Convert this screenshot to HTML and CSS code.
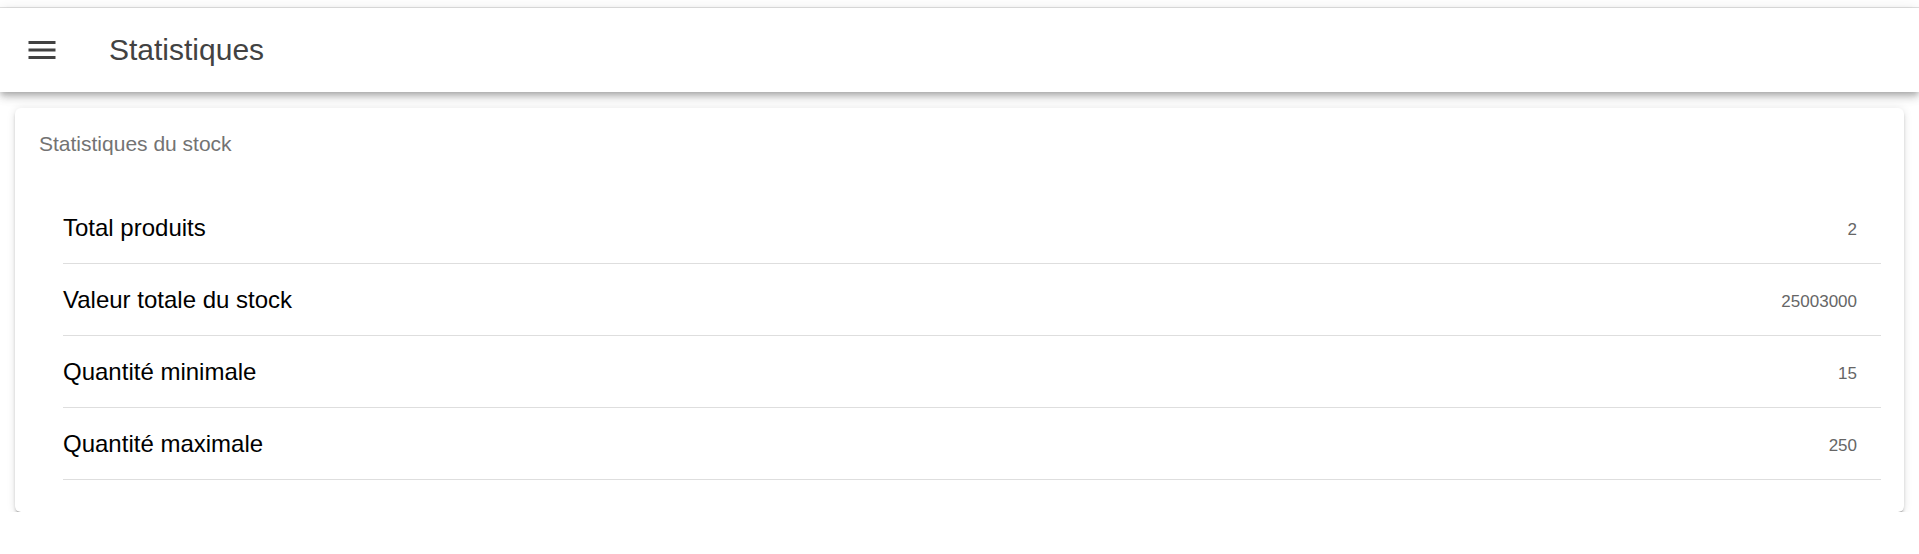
FILE: index.html
```html
<!DOCTYPE html>
<html lang="fr">
<head>
<meta charset="utf-8">
<title>Statistiques</title>
<link rel="stylesheet" href="styles.css">
</head>
<body>
<div class="top-strip"></div>
<header class="toolbar">
  <button class="menu-btn" aria-label="Menu">
    <svg viewBox="0 0 24 24" width="36" height="36"><path d="M3 18h18v-2H3v2zm0-5h18v-2H3v2zm0-7v2h18V6H3z" fill="#424242"/></svg>
  </button>
  <h1 class="toolbar-title">Statistiques</h1>
</header>
<main class="content">
  <section class="card">
    <div class="card-header">Statistiques du stock</div>
    <ul class="stat-list">
      <li class="stat-row"><span class="stat-label">Total produits</span><span class="stat-value">2</span></li>
      <li class="stat-row"><span class="stat-label">Valeur totale du stock</span><span class="stat-value">25003000</span></li>
      <li class="stat-row"><span class="stat-label">Quantité minimale</span><span class="stat-value">15</span></li>
      <li class="stat-row"><span class="stat-label">Quantité maximale</span><span class="stat-value">250</span></li>
    </ul>
  </section>
</main>
</body>
</html>
```

FILE: styles.css
```css
html, body {
  margin: 0;
  padding: 0;
  background: #ffffff;
  font-family: "Liberation Sans", Arial, sans-serif;
}

.top-strip {
  height: 7px;
  border-bottom: 1px solid #e4e4e4;
  background: #ffffff;
}

.toolbar {
  position: relative;
  z-index: 2;
  height: 84px;
  display: flex;
  align-items: center;
  padding: 0 24px;
  background: #ffffff;
  box-shadow: 0 3px 6px -1px rgba(0,0,0,0.22), 0 6px 8px 0 rgba(0,0,0,0.12), 0 2px 14px 0 rgba(0,0,0,0.1);
}

.menu-btn {
  width: 36px;
  height: 36px;
  padding: 0;
  margin: 0;
  border: 0;
  background: transparent;
  display: flex;
}

.toolbar-title {
  margin: 0 0 0 49px;
  font-size: 30px;
  font-weight: 400;
  color: #424242;
  line-height: 36px;
}

.content {
  padding: 16px 15px 0;
}

.card {
  background: #ffffff;
  border-radius: 6px;
  box-shadow: 0 4px 2px -2px rgba(0,0,0,0.22), 0 3px 3px 0 rgba(0,0,0,0.14), 0 1px 8px 0 rgba(0,0,0,0.12);
  padding: 0 23px 32px 48px;
}

.card-header {
  margin-left: -24px;
  padding: 22px 0 35px;
  font-size: 21px;
  line-height: 27px;
  color: #737373;
}

.stat-list {
  list-style: none;
  margin: 0;
  padding: 0;
}

.stat-row {
  height: 71px;
  display: flex;
  align-items: center;
  justify-content: space-between;
  padding-right: 24px;
  border-bottom: 1px solid #dedede;
}

.stat-label {
  font-size: 24px;
  color: #000000;
}

.stat-value {
  font-size: 17px;
  color: #666666;
  padding-top: 4px;
}
```
